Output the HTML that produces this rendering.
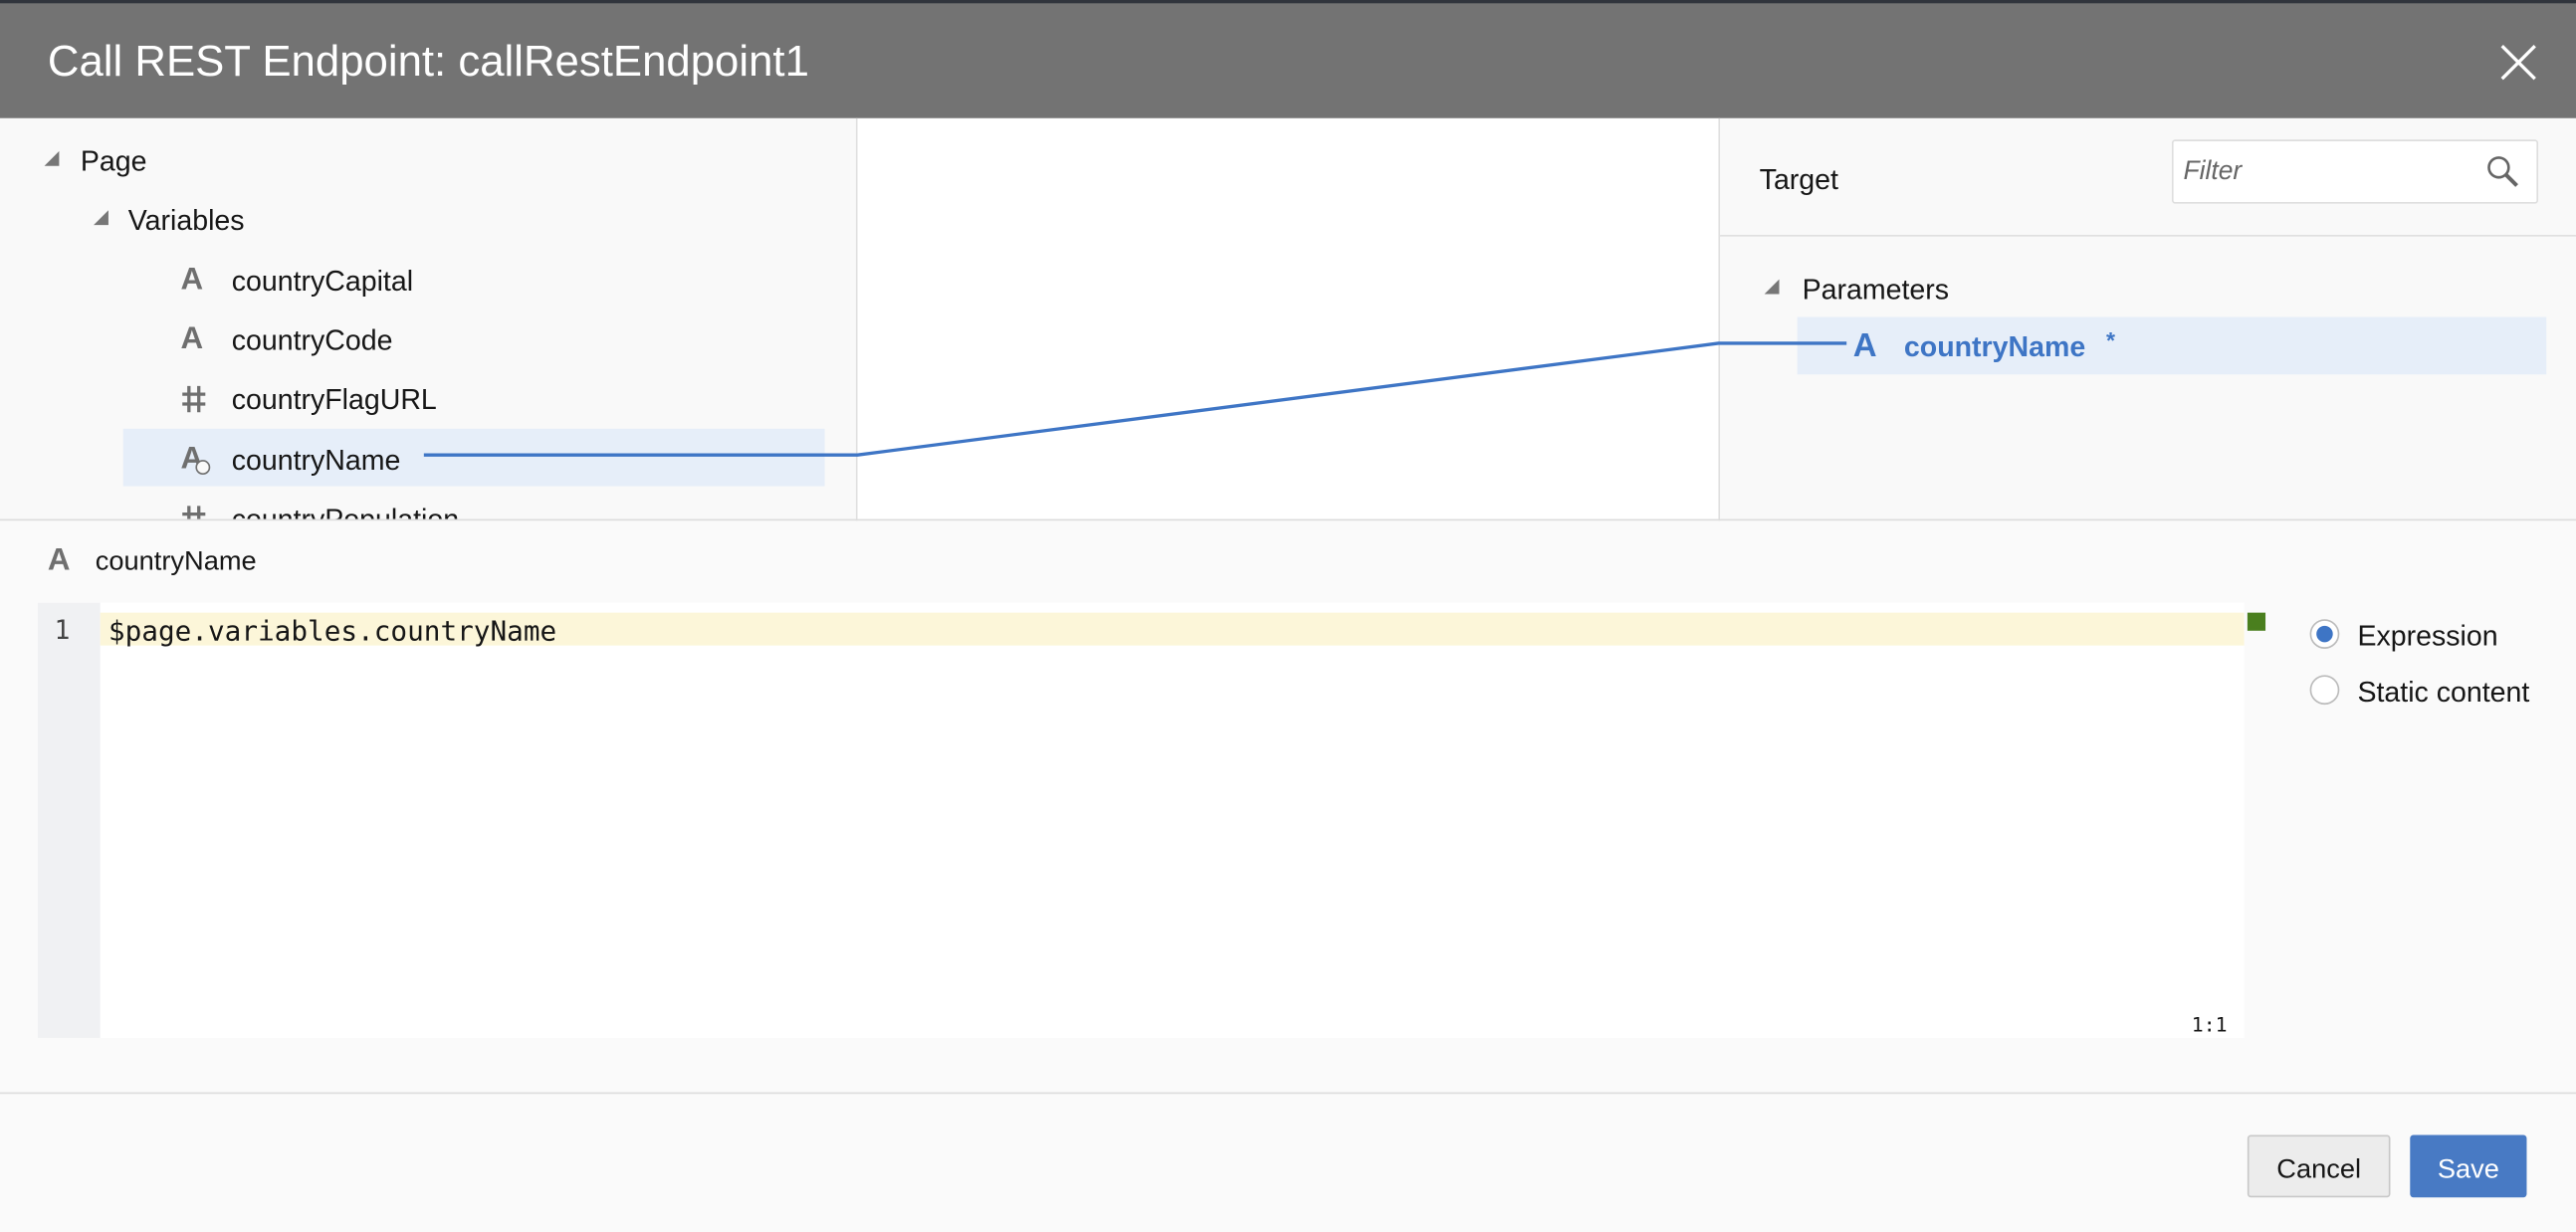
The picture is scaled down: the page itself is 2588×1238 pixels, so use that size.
<!DOCTYPE html>
<html><head><meta charset="utf-8"><style>
html,body{margin:0;padding:0;width:2588px;height:1238px;overflow:hidden;background:#fafafa;}
#w{position:absolute;left:0;top:0;width:1568px;height:750px;transform:scale(1.6505);transform-origin:0 0;font-family:"Liberation Sans",sans-serif;color:#161616;background:#fafafa;}
.a{position:absolute;}
.t{position:absolute;font-size:17.3px;white-space:nowrap;line-height:20px;}
.tri{position:absolute;width:0;height:0;border-left:9px solid transparent;border-bottom:9px solid #777;}
.ic{position:absolute;font-weight:bold;color:#6f6f6f;font-size:19px;line-height:20px;}
</style></head><body><div id="w">
<div class="a" style="left:0;top:0;width:1568px;height:72px;background:#737373;"></div>
<div class="a" style="left:0;top:0;width:1568px;height:2px;background:#30343c;"></div>
<div class="t" style="left:29px;top:22px;font-size:26.5px;line-height:30px;color:#fff;">Call REST Endpoint: callRestEndpoint1</div>
<svg class="a" style="left:1522px;top:27px" width="22" height="22"><path d="M1 1L21 21M21 1L1 21" stroke="#fff" stroke-width="2"/></svg>

<div class="a" style="left:0;top:72px;width:521px;height:245px;background:#f9f9f9;border-right:1px solid #e0e0e0;"></div>
<div class="a" style="left:522px;top:72px;width:524px;height:245px;background:#fff;"></div>
<div class="a" style="left:1046px;top:72px;width:522px;height:245px;background:#f9f9f9;border-left:1px solid #e0e0e0;"></div>
<div class="a" style="left:1047px;top:143px;width:521px;height:1px;background:#e0e0e0;"></div>
<div class="a" style="left:0;top:316px;width:1568px;height:1px;background:#dcdcdc;"></div>

<div class="tri" style="left:27px;top:92px"></div>
<div class="t" style="left:49px;top:88px;">Page</div>
<div class="tri" style="left:57px;top:128px"></div>
<div class="t" style="left:78px;top:124px;">Variables</div>
<div class="a" style="left:75px;top:261px;width:427px;height:35px;background:#e6eef9;"></div>
<div class="ic" style="left:110px;top:161px">A</div><div class="t" style="left:141px;top:161px;">countryCapital</div>
<div class="ic" style="left:110px;top:197px">A</div><div class="t" style="left:141px;top:197px;">countryCode</div>
<svg class="a" style="left:110px;top:234px" width="16" height="18"><path d="M5 1L5 17M11 1L11 17M1 6L15 6M1 12L15 12" stroke="#6f6f6f" stroke-width="2"/></svg><div class="t" style="left:141px;top:233px;">countryFlagURL</div>
<div class="ic" style="left:110px;top:270px">A</div><div class="a" style="left:119px;top:280px;width:7px;height:7px;border-radius:50%;border:1.5px solid #6f6f6f;background:#f9f9f9"></div><div class="t" style="left:141px;top:270px;">countryName</div>
<div class="a" style="left:0;top:300px;width:521px;height:16px;overflow:hidden;"><svg class="a" style="left:110px;top:7px" width="16" height="18"><path d="M5 1L5 17M11 1L11 17M1 6L15 6M1 12L15 12" stroke="#6f6f6f" stroke-width="2"/></svg><div class="t" style="left:141px;top:6px;">countryPopulation</div></div>

<div class="t" style="left:1071px;top:99px;">Target</div>
<div class="a" style="left:1322px;top:85px;width:221px;height:37px;background:#fff;border:1px solid #dedede;border-radius:2px;"></div>
<div class="t" style="left:1329px;top:95px;font-style:italic;color:#666;font-size:16px;">Filter</div>
<svg class="a" style="left:1512px;top:93px" width="22" height="22"><circle cx="9" cy="9" r="6" fill="none" stroke="#666" stroke-width="1.6"/><path d="M13 13L20 20" stroke="#666" stroke-width="2.4"/></svg>
<div class="tri" style="left:1074px;top:170px"></div>
<div class="t" style="left:1097px;top:166px;">Parameters</div>
<div class="a" style="left:1094px;top:193px;width:456px;height:35px;background:#e6eef9;"></div>
<div class="ic" style="left:1128px;top:201px;color:#3e75c5;font-size:20px">A</div>
<div class="t" style="left:1159px;top:201px;color:#3e75c5;font-weight:bold;">countryName</div>
<div class="t" style="left:1282px;top:197px;color:#3e75c5;font-weight:bold;font-size:14px">*</div>

<svg class="a" style="left:0;top:0" width="1568" height="320"><path d="M258 277L522 277L1046 209L1124 209" fill="none" stroke="#3e75c5" stroke-width="2"/></svg>

<div class="ic" style="left:29px;top:332px;">A</div>
<div class="t" style="left:58px;top:332px;font-size:16.5px;">countryName</div>
<div class="a" style="left:23px;top:367px;width:1343px;height:265px;background:#fff;"></div>
<div class="a" style="left:23px;top:367px;width:38px;height:265px;background:#f0f1f3;"></div>
<div class="a" style="left:61px;top:373px;width:1305px;height:20px;background:#fcf6d9;"></div>
<div class="t" style="left:33px;top:374px;font-family:'DejaVu Sans Mono','Liberation Mono',monospace;font-size:16px;color:#444;">1</div>
<div class="t" style="left:66px;top:374px;font-family:'DejaVu Sans Mono','Liberation Mono',monospace;font-size:16.8px;">$page.variables.countryName</div>
<div class="t" style="left:1334px;top:614px;font-family:'DejaVu Sans Mono','Liberation Mono',monospace;font-size:12px;">1:1</div>
<div class="a" style="left:1368px;top:373px;width:11px;height:11px;background:#4a7f1e;"></div>

<div class="a" style="left:1406px;top:377px;width:16px;height:16px;border-radius:50%;border:1px solid #bbb;background:#fff;"></div>
<div class="a" style="left:1410px;top:381px;width:10px;height:10px;border-radius:50%;background:#3e75c5;"></div>
<div class="t" style="left:1435px;top:377px;">Expression</div>
<div class="a" style="left:1406px;top:411px;width:16px;height:16px;border-radius:50%;border:1px solid #bbb;background:#fff;"></div>
<div class="t" style="left:1435px;top:411px;">Static content</div>

<div class="a" style="left:0;top:665px;width:1568px;height:1px;background:#dcdcdc;"></div>
<div class="a" style="left:1368px;top:691px;width:85px;height:36px;background:#ececec;border:1px solid #c8c8c8;border-radius:2px;"></div>
<div class="t" style="left:1368px;top:702px;width:87px;text-align:center;font-size:16.5px;">Cancel</div>
<div class="a" style="left:1467px;top:691px;width:71px;height:38px;background:#487ac4;border-radius:2px;"></div>
<div class="t" style="left:1467px;top:702px;width:71px;text-align:center;font-size:16.5px;color:#fff;">Save</div>
</div></body></html>
